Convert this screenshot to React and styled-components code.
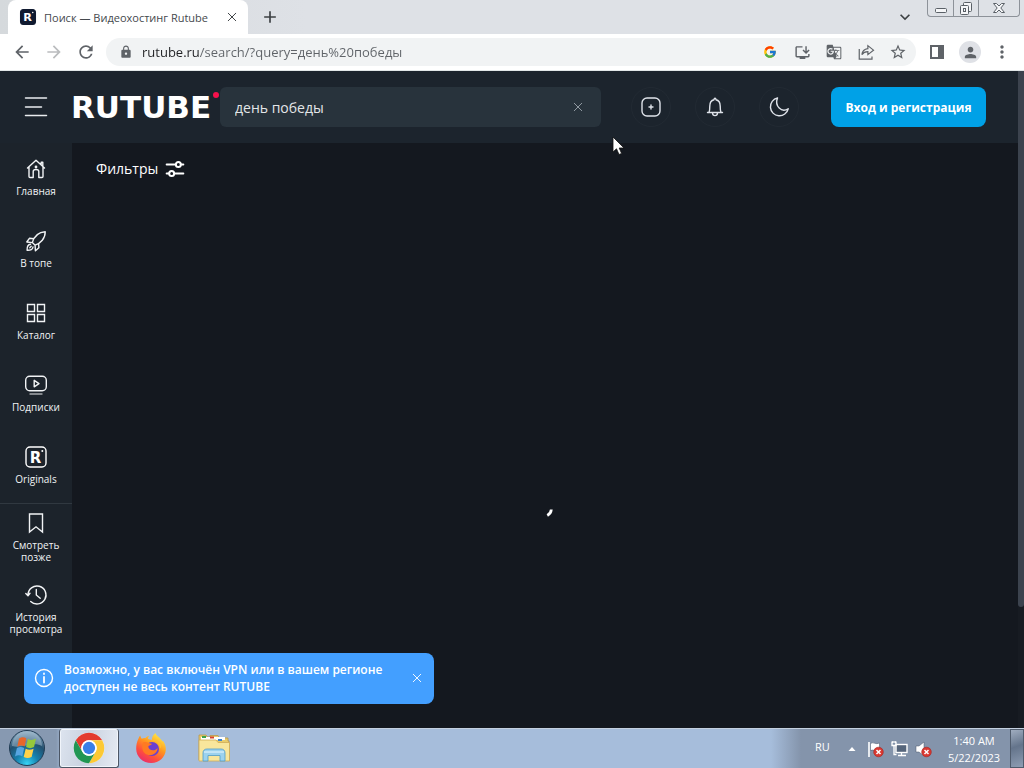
import React from 'react';
import styled, { createGlobalStyle } from 'styled-components';
import {
  MdArrowBack, MdArrowForward, MdRefresh, MdLock, MdInstallDesktop, MdGTranslate,
  MdStarBorder, MdMoreVert, MdPerson, MdClose, MdAdd, MdKeyboardArrowDown,
} from 'react-icons/md';
import { FcGoogle } from 'react-icons/fc';

const Global = createGlobalStyle`
  *, *::before, *::after { box-sizing: border-box; }
  body { margin: 0; font-family: "Open Sans", "Noto Sans", sans-serif; background: #14181f; }
  button, input { font: inherit; color: inherit; }
  button { padding: 0; border: 0; background: none; cursor: pointer; }
  svg { display: block; flex: none; }
`;

const Desktop = styled.div`
  position: relative;
  display: flex;
  flex-direction: column;
  min-height: 100vh;
`;

/* Browser frame */

const TabStrip = styled.header`
  display: flex;
  height: 34px;
  padding: 0 4px 0 8px;
  background: linear-gradient(90deg, #d5d9dc, #dee1e6 30%);
`;

const Tab = styled.div`
  display: flex;
  align-items: center;
  width: 240px;
  padding: 0 8px 0 11px;
  gap: 7px;
  border-radius: 8px 8px 0 0;
  background: #fff;
  color: #45494d;
  font-size: 11px;
`;

const TabTitle = styled.span`
  flex: 1;
  white-space: nowrap;
`;

const PlainButton = styled.button`
  display: flex;
  align-items: center;
  justify-content: center;
  flex: none;
  width: ${(p) => p.$size || 24}px;
  height: ${(p) => p.$size || 24}px;
  color: ${(p) => p.$color || '#5f6368'};
`;

const StripActions = styled.div`
  display: flex;
  flex: 1;
  align-items: center;
  justify-content: space-between;
  padding: 0 10px;
`;

const WindowControls = styled.div`
  display: flex;
  align-self: flex-start;
  height: 17px;
  border: 1px solid #8d9299;
  border-top: 0;
  border-radius: 0 0 4px 4px;
`;

const WindowButton = styled.button`
  display: flex;
  align-items: center;
  justify-content: center;
  width: ${(p) => p.$width}px;
  & + & { border-left: 1px solid #8d9299; }
`;

const Toolbar = styled.nav`
  display: flex;
  align-items: center;
  height: 37px;
  padding: 0 10px;
  gap: 8px;
  background: #fff;
  border-bottom: 1px solid #e2e7e8;
`;

const AddressBar = styled.div`
  display: flex;
  flex: 1;
  align-items: center;
  height: 28px;
  padding: 0 6px 0 13px;
  gap: 9px;
  border-radius: 14px;
  background: #f1f3f4;
  color: #5f6368;
`;

const AddressInput = styled.input`
  flex: 1;
  min-width: 0;
  height: 24px;
  padding: 0;
  border: 0;
  outline: 0;
  font-size: 13px;
  color: #5f6368;
  background: linear-gradient(90deg, #202124 57px, #5f6368 57px);
  background-clip: text;
  -webkit-background-clip: text;
  -webkit-text-fill-color: transparent;
`;

const AddressActions = styled.div`
  display: flex;
  gap: 8px;
`;

const Avatar = styled.span`
  display: flex;
  align-items: center;
  justify-content: center;
  width: 22px;
  height: 22px;
  border-radius: 50%;
  background: #dfe1e6;
`;

/* Site */

const Site = styled.div`
  position: relative;
  display: flex;
  flex: 1;
  background: #14181f;
  color: #fff;
`;

const SiteBody = styled.div`
  display: flex;
  flex: 1;
  flex-direction: column;
`;

const ScrollTrack = styled.div`
  width: 6px;
  background: #171b22;
`;

const ScrollThumb = styled.div`
  height: 536px;
  max-height: 100%;
  border-radius: 0 0 3px 3px;
  background: #3c434e;
`;

const SiteHeader = styled.header`
  display: flex;
  align-items: center;
  height: 72px;
  padding: 0 32px 0 24px;
  background: #1c242d;
`;

const Logo = styled.a`
  position: relative;
  width: 149px;
  margin-left: 23px;
  color: #fff;
  font: bold 31px/40px "DejaVu Sans", sans-serif;
  text-decoration: none;
`;

const LogoDot = styled.span`
  position: absolute;
  top: 5px;
  right: 1px;
  width: 6px;
  height: 6px;
  border-radius: 50%;
  background: #f6114c;
`;

const SearchForm = styled.form`
  display: flex;
  flex: 1;
  align-items: center;
  height: 40px;
  margin-right: 30px;
  padding: 0 11px 0 15px;
  border-radius: 6px;
  background: #28333c;
`;

const SearchInput = styled.input`
  flex: 1;
  min-width: 0;
  padding: 0;
  border: 0;
  outline: 0;
  background: none;
  color: #e3e6e8;
  font-size: 14px;
`;

const HeaderActions = styled.div`
  display: flex;
  gap: 24px;
  margin-right: 32px;
`;

const RoundButton = styled.button`
  display: flex;
  align-items: center;
  justify-content: center;
  width: 40px;
  height: 40px;
  border: 1px solid #222a33;
  border-radius: 50%;
  color: #dfe3ea;
`;

const LoginButton = styled.button`
  width: 155px;
  height: 40px;
  border-radius: 8px;
  background: #00a1e7;
  color: #fff;
  font-size: 12px;
  font-weight: 700;
  white-space: nowrap;
`;

const Columns = styled.div`
  display: flex;
  flex: 1;
`;

const Sidebar = styled.nav`
  width: 72px;
  background: #1c232b;
`;

const SideGroup = styled.div`
  display: flex;
  flex-direction: column;
  gap: 14px;
  padding-top: ${(p) => p.$top}px;
  & + & { border-top: 1px solid #303840; }
`;

const SideLink = styled.a`
  display: flex;
  flex-direction: column;
  align-items: center;
  gap: 4px;
  height: 58px;
  color: #f1f3f5;
  font-size: 10px;
  line-height: 12px;
  text-align: center;
  text-decoration: none;
`;

const Content = styled.main`
  display: flex;
  flex: 1;
  flex-direction: column;
`;

const FilterButton = styled.button`
  display: flex;
  align-items: center;
  align-self: flex-start;
  gap: 7px;
  height: 51px;
  margin-left: 24px;
  font-size: 14px;
`;

const Loading = styled.div`
  display: flex;
  flex: 1;
  align-items: center;
  justify-content: center;
  padding-top: 96px;
`;

const Toast = styled.div`
  position: absolute;
  left: 24px;
  bottom: 24px;
  display: flex;
  align-items: center;
  width: 410px;
  padding: 8px 5px 9px 8px;
  gap: 8px;
  border-radius: 8px;
  background: #439fff;
  color: #fff;
`;

const ToastText = styled.p`
  flex: 1;
  margin: 0;
  font-size: 12px;
  font-weight: 600;
  line-height: 17px;
`;

/* Taskbar */

const Taskbar = styled.footer`
  display: flex;
  height: 40px;
  border-top: 1px solid #c4d0e0;
  background: linear-gradient(90deg, #8799b1 0 56px, #a6bddb 64px);
`;

const StartArea = styled.div`
  width: 59px;
`;

const TaskButton = styled.button`
  display: flex;
  align-items: center;
  justify-content: center;
  width: ${(p) => p.$width || 63}px;
  height: 39px;
  border: 1px solid ${(p) => (p.$active ? '#4c5665' : 'transparent')};
  border-top: 0;
  border-radius: 3px;
  background: ${(p) => (p.$active ? 'linear-gradient(100deg, #dde4ef, #c9d2e0 45%, #e6ebf3)' : 'none')};
  box-shadow: ${(p) => (p.$active ? 'inset 0 0 0 1px #f1f5fb' : 'none')};
`;

const Tray = styled.div`
  display: flex;
  align-items: center;
  margin-left: auto;
  padding-left: 44px;
  background: linear-gradient(90deg, #a6bddb, #8494ab 30px);
  color: #fff;
  font-size: 11px;
  line-height: 17px;
`;

const Language = styled.span`
  width: 29px;
  padding-bottom: 5px;
`;

const TrayIcons = styled.div`
  display: flex;
  align-items: center;
  gap: 7px;
`;

const Clock = styled.time`
  width: 72px;
  margin-left: 6px;
  text-align: center;
`;

const ShowDesktop = styled.button`
  width: 14px;
  height: 39px;
  border: 1px solid #4f5b6c;
  background: linear-gradient(160deg, #a0adc0, #64748b 45%, #8e9db3);
`;

const Pointer = styled.svg`
  position: absolute;
  left: 612px;
  top: 136px;
  pointer-events: none;
`;

const Line = ({ size = 24, width = 1.4, children, ...rest }) => (
  <svg width={size} height={size} viewBox="0 0 24 24" fill="none" stroke="currentColor"
    strokeWidth={width} strokeLinecap="round" strokeLinejoin="round" aria-hidden="true" {...rest}>
    {children}
  </svg>
);

const RBadge = ({ size, fill, outline }) => (
  <svg width={size} height={size} viewBox="0 0 24 24" aria-hidden="true">
    <rect x="2" y="2" width="20" height="20" rx="4" fill={fill} stroke={outline} strokeWidth="1.4" />
    <text x="11.5" y="17.5" textAnchor="middle" fontFamily="'DejaVu Sans', sans-serif" fontWeight="700" fontSize="15" fill="#fff">R</text>
    <circle cx="18.3" cy="6" r="1" fill="#fff" />
  </svg>
);

const icons = {
  home: (
    <Line>
      <path d="M3.5 11 12 3.3l8.5 7.7M5 10v9.5c0 .7.4 1 1 1h3.2v-6c0-1.3.9-2 2.8-2s2.8.7 2.8 2v6H18c.6 0 1-.3 1-1V10M18.8 9V5.2h-1.6v2" />
      <circle cx="12" cy="10" r=".7" />
    </Line>
  ),
  rocket: (
    <Line>
      <path d="M8.3 13.6C10 8 14.5 3.2 21.2 2.8c.2 6.6-4.6 11.4-10.1 13.4zM9.6 9.8 5.4 9.3 2.8 13l5.5.6M14.6 14.7l.3 4-3.5 3-.3-5.5M6.5 15.3c-2.3.1-3.5 2.5-3.4 6 3.4.2 5.8-1 5.9-3.3M5.8 18.7l1.4-1.4" />
    </Line>
  ),
  grid: (
    <Line strokeLinejoin="miter">
      <path d="M3.5 3.5h7v7h-7zM13.5 3.5h7v7h-7zM3.5 13.5h7v7h-7zM13.5 13.5h7v7h-7z" />
    </Line>
  ),
  play: (
    <Line>
      <rect x="1.7" y="3.2" width="20.6" height="14.6" rx="4" />
      <path d="M10.2 7.3v6.5l4.8-3.2z" />
      <path d="M6 21h12" opacity=".65" />
    </Line>
  ),
  originals: <RBadge size={24} fill="none" outline="#fff" />,
  bookmark: (
    <Line strokeLinejoin="miter"><path d="M5.500 3h13v18L12 15.800 5.500 21z" /></Line>
  ),
  history: (
    <Line>
      <path d="M4 12a9 9 0 1 1 2.700 6.400M1.800 10.500 4 12.700l2-2.400M12.300 6.500V12l3.900 3.200" />
    </Line>
  ),
};

const mainLinks = [
  ['home', 'Главная'], ['rocket', 'В топе'], ['grid', 'Каталог'], ['play', 'Подписки'], ['originals', 'Originals'],
];
const personalLinks = [['bookmark', 'Смотреть позже'], ['history', 'История просмотра']];

const Links = ({ items }) => items.map(([icon, label]) => (
  <SideLink key={icon} href={`#${icon}`}>{icons[icon]}<span>{label}</span></SideLink>
));

const Cross = ({ size = 12 }) => (
  <Line size={size} width="2.2"><path d="m3 3 18 18M21 3 3 21" /></Line>
);

const ShareIcon = () => (
  <Line size={18} width="1.6" strokeLinecap="butt" strokeLinejoin="miter">
    <path d="M3 8v13.500h17V18" />
    <path d="M14.500 7.500V3.500L22 9.500l-7.500 6v-4c-3.500 0-6 1-8 4 .5-4.500 3.500-7.500 8-8z" />
  </Line>
);

const StartOrb = () => (
  <svg width="38" height="38" viewBox="0 0 38 38" aria-hidden="true">
    <defs>
      <radialGradient id="orb" cx=".5" cy=".95" r=".9">
        <stop offset="0" stopColor="#35d4f5" /><stop offset=".35" stopColor="#1681ae" />
        <stop offset=".7" stopColor="#23506f" /><stop offset="1" stopColor="#7fa0b8" />
      </radialGradient>
    </defs>
    <circle cx="19" cy="19" r="17.500" fill="url(#orb)" stroke="#213b53" />
    <path d="M4 17a15 15 0 0 1 30 0c-9-5-20 3-30 0z" fill="#b9cddc" opacity=".45" />
    <path d="M11 9.500c3-1.700 5-1.500 7.300-.2L16.600 17.500c-2.500-1.200-4.700-1.200-7.300.2z" fill="#e8662a" />
    <path d="M19.800 10c2.700 1.300 5 1.300 8.200-.2l-2 8.300c-2.800 1.500-5.200 1.400-7.900 0z" fill="#96c83b" />
    <path d="M8.900 19c2.500-1.300 4.800-1.200 7.300 0l-1.900 8.300c-2.600-1.300-4.700-1.200-7.300.1z" fill="#57a5e1" />
    <path d="M17.700 19.800c2.800 1.300 5.100 1.300 7.900-.1l-2 8.200c-2.800 1.500-5.100 1.400-7.900.1z" fill="#ffd34b" />
  </svg>
);

const ChromeIcon = () => (
  <svg width="32" height="32" viewBox="0 0 48 48" aria-hidden="true">
    <circle cx="24" cy="24" r="23" fill="#fff" />
    <path d="M4.100 12.500a23 23 0 0 1 39.800 0H24a11.500 11.500 0 0 0-10 17.300z" fill="#e33b2e" />
    <path d="M43.900 12.500A23 23 0 0 1 24 47l10-17.300a11.500 11.500 0 0 0-10-17.200z" fill="#fcc934" />
    <path d="M24 47A23 23 0 0 1 4.100 12.500L14 29.700a11.500 11.500 0 0 0 20 0z" fill="#219653" />
    <circle cx="24" cy="24" r="11.500" fill="#fff" /><circle cx="24" cy="24" r="9.200" fill="#397fe8" />
  </svg>
);

const FirefoxIcon = () => (
  <svg width="32" height="32" viewBox="0 0 32 32" aria-hidden="true">
    <defs>
      <linearGradient id="fox" x1=".8" y1="0" x2=".2" y2="1">
        <stop offset="0" stopColor="#fff24a" /><stop offset=".4" stopColor="#ff9a1f" />
        <stop offset=".7" stopColor="#ff4f3c" /><stop offset="1" stopColor="#e62873" />
      </linearGradient>
    </defs>
    <path d="M3.500 6.500c.4-1.300 1-2.200 1.800-3 .2 1.500.7 2.400 1.500 3.200C8 6 9 5.900 10.400 6c1.100-1.300 2.300-2 3.800-2.300-1 1.300-1.300 2.300-1 3.300 1.500.4 2.400.7 3.600 1.200.2-3 1.300-5.600 3.700-7.200.3 3 5.500 5 7 8.600l.5-.9c2.300 3.300 3 6.200 2.800 9.300-.6 7.200-6.500 13-14.600 13-8.300 0-15-6.200-15-14 0-4 .6-7.300 2.300-10.500z" fill="url(#fox)" />
    <circle cx="17" cy="17" r="7" fill="#6b3fd0" />
    <path d="M8 10.500c3.500-1.700 5.500 1.200 9 1.200-.5 1.500-3.500 1.500-3.700 2.800 0 4 6.500 5.500 9.300 1.500-.2 6.700-9.200 9.800-13.500 4.600C6.800 18 7 13 8 10.500z" fill="#ff7a22" />
    <path d="M17 8.500c4 0 8 3.500 8 8 1-1 1.300-2 1.200-3.500C25.500 9 21 7 17 8.500z" fill="#ffbd2f" />
  </svg>
);

const ExplorerIcon = () => (
  <svg width="34" height="32" viewBox="0 0 34 32" aria-hidden="true">
    <path d="M2 5V3h7l1.500 2H13V3.500h8L22.500 6H31v3h1v19H2z" fill="#e8cc6b" stroke="#b9974c" strokeWidth=".8" />
    <path d="M4 5h24v3H4z" fill="#fff" />
    <path d="M5 4h4v2H5z" fill="#3ea14a" /><path d="M13 4.500h4v2h-4z" fill="#d7432e" /><path d="M21 7h4v2h-4z" fill="#3a82cd" />
    <path d="M2 8h17l2 2.500h11.500V29H2z" fill="#f8e69c" stroke="#cfac57" strokeWidth=".8" />
    <path d="M6 29v-8c0-2.500 1.500-4 4-4h14c2.500 0 4 1.500 4 4v8h-5v-5.500H11V29z" fill="#9cd2ee" stroke="#4f9cc9" strokeWidth=".8" />
    <path d="M7 20h20" stroke="#e9f8ff" />
  </svg>
);

const ErrorMark = () => (
  <>
    <circle cx="11.500" cy="12" r="4.800" fill="#d93932" stroke="#a8231f" strokeWidth=".6" />
    <path d="m9.500 10 4 4M13.500 10l-4 4" stroke="#fff" strokeWidth="1.500" />
  </>
);

const FlagIcon = () => (
  <svg width="17" height="18" viewBox="0 0 17 18" aria-hidden="true">
    <path d="M2 2v15" stroke="#fff" strokeWidth="1.600" />
    <path d="M3.500 3.500c3-2 5 1.500 9-.5v7c-4 2-6-1-9 .5z" fill="#fff" stroke="#48576b" strokeWidth=".5" /><ErrorMark />
  </svg>
);

const NetworkIcon = () => (
  <svg width="17" height="18" viewBox="0 0 17 18" fill="none" aria-hidden="true">
    <rect x="5" y="4.500" width="11" height="8" fill="#55657b" stroke="#fff" strokeWidth="1.400" />
    <path d="M7 15.500h8M10.500 13v2.500M1 1.500v4h4v-4M3 5.500v9h2.500M2 1v2M4 1v2" stroke="#fff" strokeWidth="1.300" />
  </svg>
);

const SpeakerIcon = () => (
  <svg width="17" height="18" viewBox="0 0 17 18" aria-hidden="true">
    <path d="M1 6h3l5-4v14l-5-4H1z" fill="#fff" stroke="#48576b" strokeWidth=".5" /><ErrorMark />
  </svg>
);

export default function App() {
  return (
    <Desktop>
      <Global />
      <TabStrip>
        <Tab>
          <RBadge size={18} fill="#101a30" outline="#101a30" />
          <TabTitle>Поиск — Видеохостинг Rutube</TabTitle>
          <PlainButton $size={16} $color="#303438" aria-label="Закрыть вкладку"><Cross size={10} /></PlainButton>
        </Tab>
        <StripActions>
          <PlainButton $color="#3c4043" aria-label="Новая вкладка"><MdAdd size={20} /></PlainButton>
          <PlainButton $color="#3c4043" aria-label="Поиск вкладок"><MdKeyboardArrowDown size={20} /></PlainButton>
        </StripActions>
        <WindowControls>
          <WindowButton $width={25} aria-label="Свернуть">
            <svg width="14" height="16" viewBox="0 0 14 16" fill="#f5f6f8" stroke="#5a6067"><rect x="1.500" y="8.500" width="11" height="4" rx="1" /></svg>
          </WindowButton>
          <WindowButton $width={25} aria-label="Восстановить">
            <svg width="14" height="16" viewBox="0 0 14 16" fill="#f5f6f8" stroke="#5a6067"><rect x="4.500" y="2.500" width="8" height="9" rx="1" /><rect x="1.500" y="5.500" width="8" height="9" rx="1" /><rect x="4.500" y="8.500" width="2" height="3" /></svg>
          </WindowButton>
          <WindowButton $width={41} aria-label="Закрыть">
            <svg width="14" height="16" viewBox="0 0 14 16" fill="#f5f6f8" stroke="#5a6067"><path d="M1.500 3.500h3L7 6l2.500-2.500h3L8.800 8l3.700 4.500h-3L7 10l-2.500 2.500h-3L5.200 8z" /></svg>
          </WindowButton>
        </WindowControls>
      </TabStrip>

      <Toolbar>
        <PlainButton aria-label="Назад"><MdArrowBack size={20} /></PlainButton>
        <PlainButton $color="#babcbe" aria-label="Вперёд"><MdArrowForward size={20} /></PlainButton>
        <PlainButton aria-label="Обновить"><MdRefresh size={20} /></PlainButton>
        <AddressBar>
          <MdLock size={14} />
          <AddressInput aria-label="Адрес" defaultValue="rutube.ru/search/?query=день%20победы" />
          <AddressActions>
            <PlainButton aria-label="Google"><FcGoogle size={14} /></PlainButton>
            <PlainButton aria-label="Установить"><MdInstallDesktop size={17} /></PlainButton>
            <PlainButton aria-label="Перевести"><MdGTranslate size={16} /></PlainButton>
            <PlainButton aria-label="Поделиться"><ShareIcon /></PlainButton>
            <PlainButton aria-label="В закладки"><MdStarBorder size={18} /></PlainButton>
          </AddressActions>
        </AddressBar>
        <PlainButton $size={26} aria-label="Боковая панель">
          <svg width="14" height="14" viewBox="0 0 14 14"><path d="M0 0h14v14H0zM2 2v10h6V2z" fill="currentColor" fillRule="evenodd" /></svg>
        </PlainButton>
        <PlainButton aria-label="Профиль"><Avatar><MdPerson size={17} /></Avatar></PlainButton>
        <PlainButton aria-label="Меню"><MdMoreVert size={20} /></PlainButton>
      </Toolbar>

      <Site>
        <SiteBody>
          <SiteHeader>
            <PlainButton $size={24} $color="#e9ecef" aria-label="Открыть меню">
              <Line width="1.500"><path d="M1.500 3h21M1.500 12h16M1.500 20.500h21" /></Line>
            </PlainButton>
            <Logo href="#top">RUTUBE<LogoDot /></Logo>
            <SearchForm role="search" onSubmit={(e) => e.preventDefault()}>
              <SearchInput aria-label="Поиск" defaultValue="день победы" />
              <PlainButton type="button" $color="#9aa3ab" aria-label="Очистить"><Cross size={10} /></PlainButton>
            </SearchForm>
            <HeaderActions>
              <RoundButton aria-label="Добавить">
                <Line><rect x="3" y="3" width="18" height="18" rx="5" /><path d="M12 10v4M10 12h4" /></Line>
              </RoundButton>
              <RoundButton aria-label="Уведомления">
                <Line><path d="M4.500 17.500h15M6 17.500c.8-2 .8-4 .8-6.500 0-3.500 1.700-5.600 4.200-6.200.2-2 1.800-2 2 0 2.500.6 4.200 2.700 4.200 6.200 0 2.500 0 4.500.8 6.500M9.500 18c.2 3.500 4.800 3.500 5 0" /></Line>
              </RoundButton>
              <RoundButton aria-label="Тёмная тема">
                <Line><path d="M10.500 3a9 9 0 1 0 10.700 10.800c-3 1.800-6.700 1.500-9-.8-2.500-2.500-3-6.700-1.700-10z" /></Line>
              </RoundButton>
            </HeaderActions>
            <LoginButton>Вход и регистрация</LoginButton>
          </SiteHeader>
          <Columns>
            <Sidebar>
              <SideGroup $top={14}><Links items={mainLinks} /></SideGroup>
              <SideGroup $top={7}><Links items={personalLinks} /></SideGroup>
            </Sidebar>
            <Content>
              <FilterButton>
                Фильтры
                <Line size={20} width="2.400"><path d="M2 6.500h11M19 6.500h3M2 17.500h3M11 17.500h11" /><circle cx="16" cy="6.500" r="3" /><circle cx="8" cy="17.500" r="3" /></Line>
              </FilterButton>
              <Loading role="status" aria-label="Загрузка">
                <svg width="20" height="20" viewBox="0 0 20 20"><path d="M16.300 10.500q-.3 4-4 6" fill="none" stroke="#fff" strokeWidth="2.800" /></svg>
              </Loading>
            </Content>
          </Columns>
        </SiteBody>
        <ScrollTrack><ScrollThumb /></ScrollTrack>
        <Toast role="alert">
          <Line><circle cx="12" cy="12" r="8.500" /><path d="M12 11v5.500M12 7.500v.5" strokeWidth="1.800" /></Line>
          <ToastText>Возможно, у вас включён VPN или в вашем регионе доступен не весь контент RUTUBE</ToastText>
          <PlainButton $color="#fff" aria-label="Закрыть сообщение"><Cross size={10} /></PlainButton>
        </Toast>
      </Site>

      <Taskbar>
        <StartArea><TaskButton $width={54} aria-label="Пуск"><StartOrb /></TaskButton></StartArea>
        <TaskButton $active $width={60} aria-label="Chrome"><ChromeIcon /></TaskButton>
        <TaskButton aria-label="Firefox"><FirefoxIcon /></TaskButton>
        <TaskButton aria-label="Проводник"><ExplorerIcon /></TaskButton>
        <Tray>
          <Language>RU</Language>
          <TrayIcons>
            <PlainButton $size={16} aria-label="Показать значки">
              <svg width="8" height="4" viewBox="0 0 7 4"><path d="M0 4 3.500 0 7 4z" fill="#fff" /></svg>
            </PlainButton>
            <FlagIcon /><NetworkIcon /><SpeakerIcon />
          </TrayIcons>
          <Clock>1:40 AM<br />5/22/2023</Clock>
          <ShowDesktop aria-label="Показать рабочий стол" />
        </Tray>
      </Taskbar>

      <Pointer width="13" height="20" viewBox="0 0 13 20" aria-hidden="true">
        <path d="M1 1v15l3.500-3.200L7 18.500l2.600-1.100L7.200 12H12z" fill="#fff" stroke="#111" strokeWidth=".8" />
      </Pointer>
    </Desktop>
  );
}
